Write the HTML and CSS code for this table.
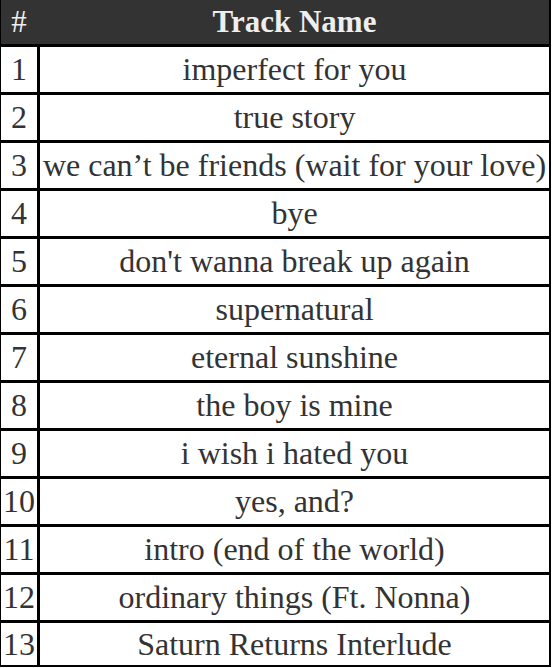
FILE: index.html
```html
<!DOCTYPE html>
<html>
<head>
<meta charset="utf-8">
<link rel="stylesheet" href="styles.css">
</head>
<body>
<div class="tracks">
  <div class="row head">
    <div class="num">#</div>
    <div class="name">Track Name</div>
  </div>
  <div class="row"><div class="num">1</div><div class="name">imperfect for you</div></div>
  <div class="row"><div class="num">2</div><div class="name">true story</div></div>
  <div class="row"><div class="num">3</div><div class="name">we can’t be friends (wait for your love)</div></div>
  <div class="row"><div class="num">4</div><div class="name">bye</div></div>
  <div class="row"><div class="num">5</div><div class="name">don't wanna break up again</div></div>
  <div class="row"><div class="num">6</div><div class="name">supernatural</div></div>
  <div class="row"><div class="num">7</div><div class="name">eternal sunshine</div></div>
  <div class="row"><div class="num">8</div><div class="name">the boy is mine</div></div>
  <div class="row"><div class="num">9</div><div class="name">i wish i hated you</div></div>
  <div class="row"><div class="num">10</div><div class="name">yes, and?</div></div>
  <div class="row"><div class="num">11</div><div class="name">intro (end of the world)</div></div>
  <div class="row"><div class="num">12</div><div class="name">ordinary things (Ft. Nonna)</div></div>
  <div class="row last"><div class="num">13</div><div class="name">Saturn Returns Interlude</div></div>
</div>
</body>
</html>
```
FILE: styles.css
```css
* { box-sizing: border-box; }
html, body { margin: 0; padding: 0; background: #fff; }
body {
  font-family: "Liberation Serif", "Times New Roman", serif;
  color: #333;
}
.tracks {
  width: 551px;
  border-left: 1px solid #000;
  border-right: 2px solid #000;
  display: flex;
  flex-direction: column;
}
.row {
  display: flex;
  height: 48px;
  border-top: 3px solid #000;
  font-size: 32px;
}
.row.head {
  height: 44px;
  border-top: none;
  background: #333;
  color: #eee;
  font-size: 31px;
}
.row.head .name { font-weight: bold; }
.row.last {
  height: 47px;
  border-bottom: 2px solid #000;
}
.num {
  width: 36px;
  flex: none;
  display: flex;
  align-items: center;
  justify-content: center;
  white-space: nowrap;
}
.name {
  flex: 1;
  display: flex;
  align-items: center;
  justify-content: center;
  white-space: nowrap;
  border-left: 3px solid #000;
}
.head .name { border-left: 3px solid #333; }
```
